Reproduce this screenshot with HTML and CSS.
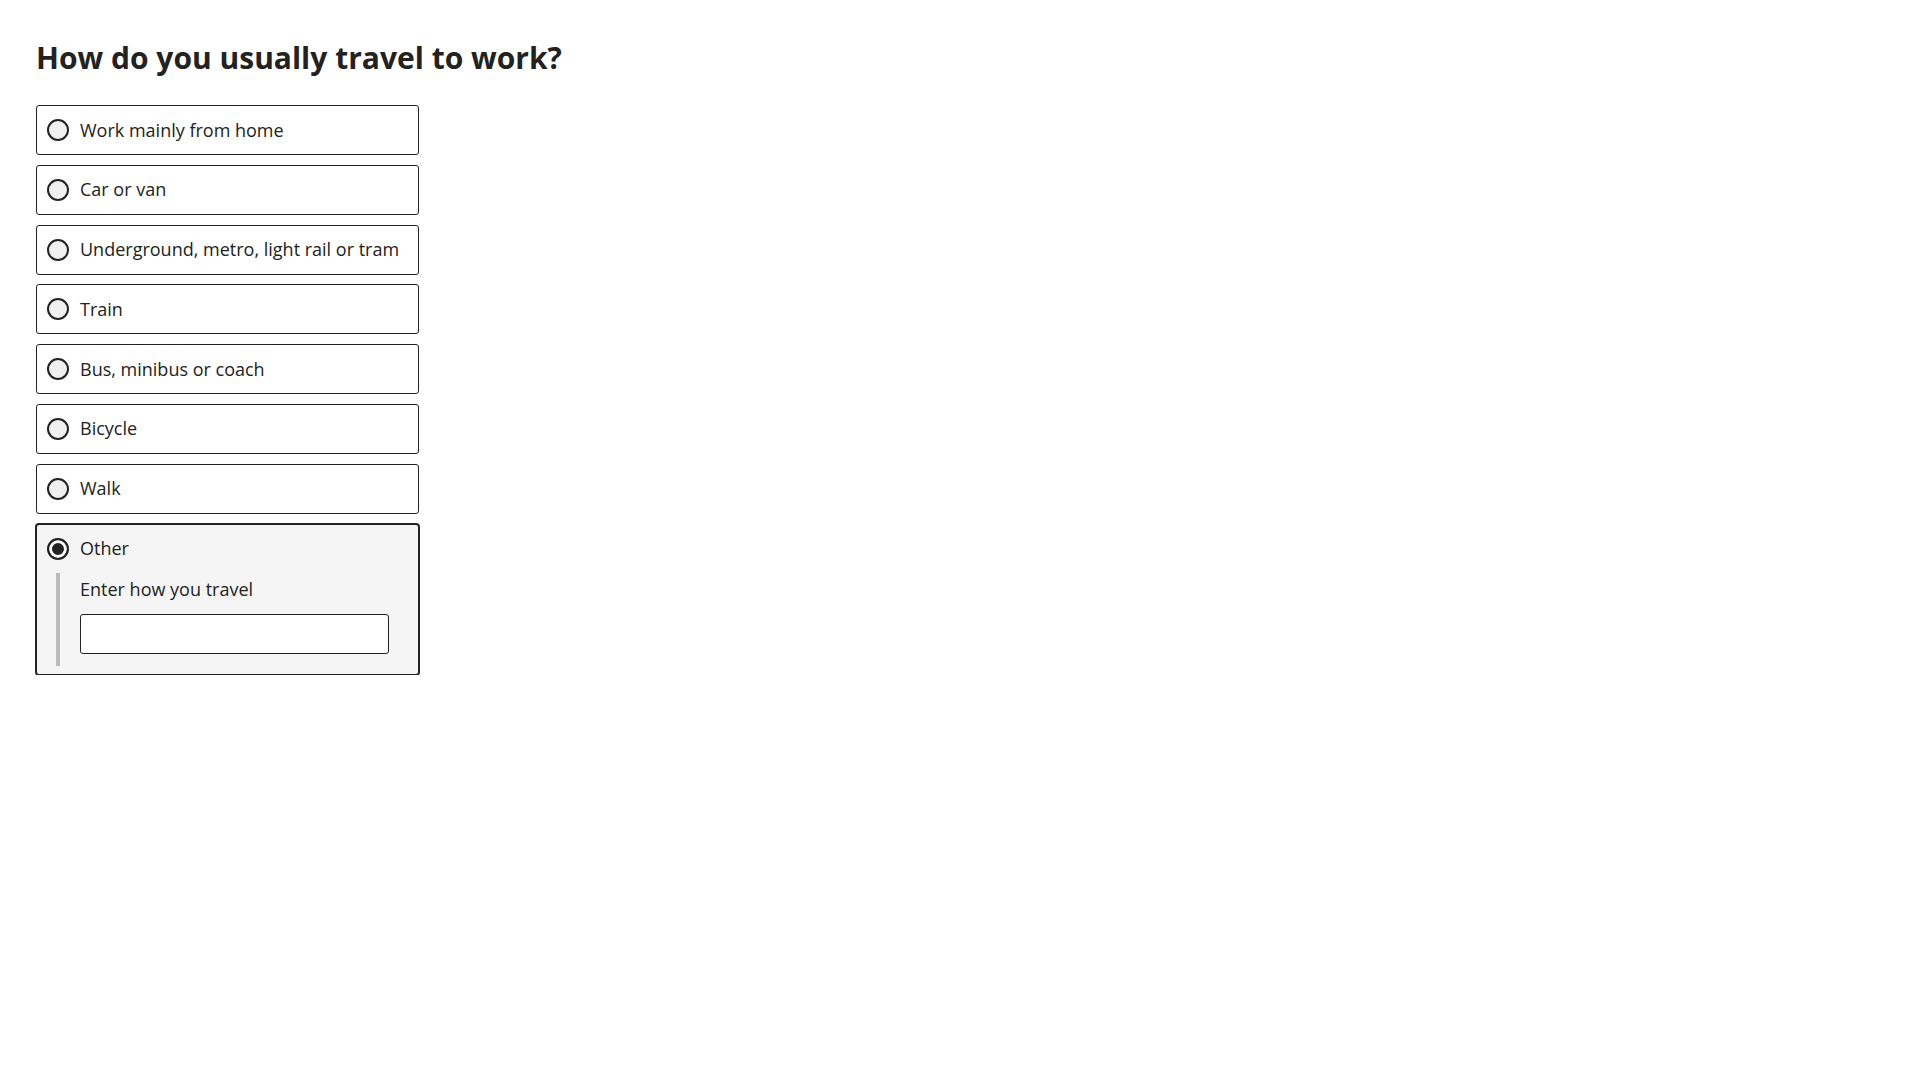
FILE: index.html
```html
<!DOCTYPE html>
<html lang="en">
<head>
<meta charset="utf-8">
<title>How do you usually travel to work?</title>
<link rel="stylesheet" href="styles.css">
</head>
<body>
<main class="page">
  <h1 class="question">How do you usually travel to work?</h1>
  <div class="options">
    <label class="option"><span class="radio"></span><span class="option-text">Work mainly from home</span></label>
    <label class="option"><span class="radio"></span><span class="option-text">Car or van</span></label>
    <label class="option"><span class="radio"></span><span class="option-text">Underground, metro, light rail or tram</span></label>
    <label class="option"><span class="radio"></span><span class="option-text">Train</span></label>
    <label class="option"><span class="radio"></span><span class="option-text">Bus, minibus or coach</span></label>
    <label class="option"><span class="radio"></span><span class="option-text">Bicycle</span></label>
    <label class="option"><span class="radio"></span><span class="option-text">Walk</span></label>
    <div class="option option-checked">
      <div class="option-row"><span class="radio radio-checked"></span><span class="option-text">Other</span></div>
      <div class="other-panel">
        <div class="other-label">Enter how you travel</div>
        <div class="text-input"></div>
      </div>
    </div>
  </div>
</main>
</body>
</html>
```
FILE: styles.css
```css
html, body {
  margin: 0;
  padding: 0;
  background: #ffffff;
}
body {
  font-family: "Open Sans", "Noto Sans", sans-serif;
  color: #222222;
}
.page {
  padding: 39px 0 0 36px;
}
.question {
  margin: 0 0 28px 0;
  font-size: 30px;
  line-height: 38px;
  font-weight: 700;
  color: #222222;
}
.options {
  display: flex;
  flex-direction: column;
  gap: 9.8px;
  width: 383px;
}
.option {
  display: flex;
  align-items: center;
  box-sizing: border-box;
  height: 50px;
  border: 1px solid #222222;
  border-radius: 3px;
  padding: 0 10px;
  font-size: 18px;
  line-height: 27px;
  background: #ffffff;
}
.radio {
  box-sizing: border-box;
  flex: none;
  width: 22px;
  height: 22px;
  border: 2px solid #222222;
  border-radius: 50%;
  background: #f0f0f0;
  margin-right: 11px;
}
.radio-checked {
  background: #222222;
  box-shadow: inset 0 0 0 3px #ffffff;
}
.option-checked {
  display: block;
  height: auto;
  background: #f5f5f5;
  box-shadow: 0 0 0 1px #222222;
  padding: 0 10px 8px 10px;
}
.option-row {
  display: flex;
  align-items: center;
  height: 48px;
}
.other-panel {
  border-left: 4px solid #bbbbbb;
  margin-left: 9px;
  padding: 3px 0 2px 20px;
}
.other-label {
  font-size: 18px;
  line-height: 27px;
  margin-bottom: 11px;
}
.text-input {
  box-sizing: border-box;
  width: 309px;
  height: 40px;
  border: 1px solid #222222;
  border-radius: 3px;
  background: #ffffff;
  margin-bottom: 10px;
}
```
